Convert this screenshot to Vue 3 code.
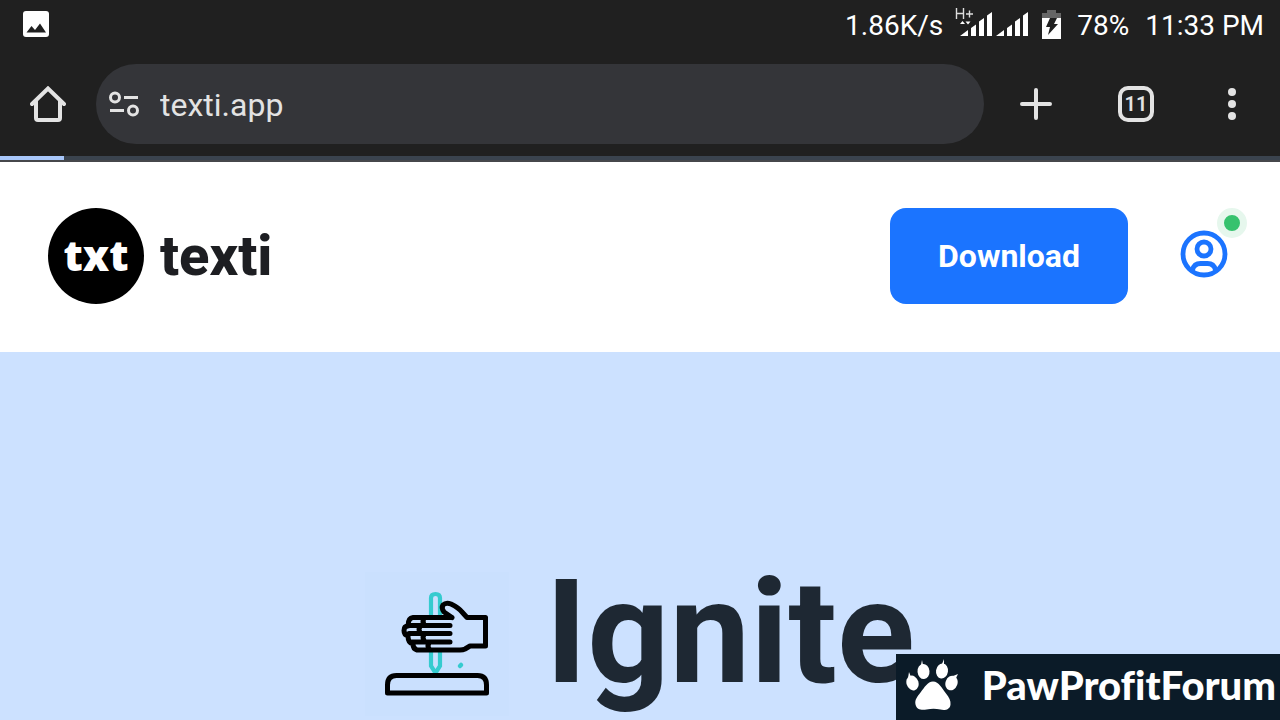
<script setup>
import { ref } from 'vue'

const address = ref('texti.app')
const tabs = 11
const loaded = 5
</script>

<template>
  <div class="screen">
    <header class="chrome">
      <div class="status">
        <svg class="photo" width="26" height="26" viewBox="0 0 26 26" aria-hidden="true">
          <rect width="26" height="26" rx="3" fill="#fff" />
          <path d="M3.5 21.5 8.5 15l3.5 4 5-6.500 6 9z" fill="#202020" />
        </svg>
        <span class="speed">1.86K/s</span>
        <svg class="signal" width="74" height="32" viewBox="0 0 74 32" aria-hidden="true">
          <path d="M1.500 0v11M8.500 0v11M1.500 5.500h7M11 6h7M14.500 2.500v7" stroke="#ddd" stroke-width="1.400" fill="none" />
          <path d="M5 16l2.500-3 2.500 3zM10.500 13.500h5L13 16.500z" fill="#fff" />
          <path d="M5 28l8-6v6zM16 20l5-3.500V28h-5zM24 13.500l5-3.500v18h-5zM32 7.500 37 4v24h-5zM41 28l8-6v6zM52 20l5-3.500V28h-5zM60 13.500l5-3.500v18h-5zM68 7.500 73 4v24h-5z" fill="#fff" />
        </svg>
        <svg class="battery" width="19" height="29" viewBox="0 0 19 29" aria-hidden="true">
          <path d="M5 0h9v3h5v5H0V3h5z" fill="#666" />
          <path d="M0 8h19v21H0z" fill="#fff" />
          <path d="M8 8h7l-3 6h4L6 25l2-8H4z" fill="#202020" />
        </svg>
        <span>78%</span>
        <time class="clock">11:33 PM</time>
      </div>

      <div class="toolbar">
        <button class="tool home" aria-label="Home">
          <svg width="36" height="36" viewBox="0 0 36 36" fill="none" stroke="#e3e3e3" stroke-width="4">
            <path d="M2 18 18 2.500 34 18" stroke-linecap="round" />
            <path d="M6 15v17q0 2 2 2h20q2 0 2-2V15" />
          </svg>
        </button>
        <div class="omnibox">
          <button class="tool site" aria-label="Site information">
            <svg width="32" height="26" viewBox="0 0 32 26" fill="none" stroke="#e3e3e3" stroke-width="3">
              <circle cx="7" cy="6.500" r="4.500" />
              <path d="M16 6.500H30M2 19.500h14" />
              <circle cx="25" cy="19.500" r="4.500" />
            </svg>
          </button>
          <input v-model="address" class="address" type="text" aria-label="Address" />
        </div>
        <button class="tool plus" aria-label="New tab">
          <svg width="32" height="32" viewBox="0 0 32 32" stroke="#e3e3e3" stroke-width="4" stroke-linecap="round">
            <path d="M16 2v28M2 16h28" />
          </svg>
        </button>
        <button class="tool tabs" aria-label="Open tabs">{{ tabs }}</button>
        <button class="tool more" aria-label="More options">
          <svg width="8" height="32" viewBox="0 0 8 32" fill="#e3e3e3">
            <circle cx="4" cy="4" r="4" /><circle cx="4" cy="16" r="4" /><circle cx="4" cy="28" r="4" />
          </svg>
        </button>
      </div>
      <div class="loading"><div class="loaded" :style="{ width: loaded + '%' }"></div></div>
    </header>

    <nav class="site-bar">
      <a class="brand" href="#">
        <span class="badge">txt</span>
        <span class="name">texti</span>
      </a>
      <button class="download">Download</button>
      <button class="account" aria-label="Account">
        <svg width="48" height="48" viewBox="0 0 48 48" fill="none" stroke="#1b74ff" stroke-width="4.800">
          <circle cx="24" cy="24" r="21" />
          <circle cx="24" cy="19" r="7" />
          <path d="M12.500 41v-1q1.500-6.500 8-6.500h7q6.500 0 8 6.500v1" />
        </svg>
        <span class="online"></span>
      </button>
    </nav>

    <main class="hero">
      <svg class="art" width="144" height="144" viewBox="1 0 144 144" fill="none" aria-hidden="true">
        <rect x="1" width="144" height="144" fill="#cae0fe" />
        <g stroke="#35cbcf" stroke-width="4.200">
          <path d="M67 43V26q0-4 4.500-4t4.500 4v17M67 80v14l4.500 7 4.500-7V80" />
          <path d="m96 94 1-1" stroke-linecap="round" stroke-width="4.500" />
        </g>
        <g stroke="#000" stroke-width="5" stroke-linejoin="round" stroke-linecap="round">
          <path d="M88 45.500 80 40q-3-4-1-7 3-3 8-1 8 4 11 8l5 5.500h18.500v28.500H106l-5 3q-2 1-5 1H53q-4-1-4-6-5-1-5-8-4-1-4-5.500t4-4.500q0-8 5-8.500h39" />
          <path d="M44 53.500h42M45 61.500h41M48 70h38M60 46q-2 4 0 7M56 54.500q-2 3 0 6M60 62.500q-2 3 0 6M65 71q-2 3 0 6" />
          <path d="M23.500 121v-8q0-9.500 9-9.500h81q9 0 9 9.500v8z" />
        </g>
      </svg>
      <h1>Ignite</h1>
    </main>

    <aside class="watermark">
      <svg width="52" height="52" viewBox="0 0 52 52" fill="#fff" aria-hidden="true">
        <ellipse cx="6.500" cy="24" rx="6" ry="7.500" transform="rotate(-18 6.500 24)" />
        <ellipse cx="17.500" cy="12.500" rx="6" ry="7.500" transform="rotate(-5 17.500 12.500)" />
        <ellipse cx="36" cy="12" rx="6" ry="7.500" transform="rotate(8 36 12)" />
        <ellipse cx="45.500" cy="24" rx="6" ry="7.500" transform="rotate(20 45.500 24)" />
        <path d="M2 19 3 13l2 5zM15 6l1-5 1 5zM36 5l2-5v6zM47 17l5-2-2 4z" />
        <path d="M27 22.500c6 0 9 7 13 12 3 4 5 7 4.500 11-.500 6-7 6-10 5-5-1-9-1-14 0-5 1-10 0-11-5-1-5 2-8 5-12 4-5 7-11 12.500-11z" />
      </svg>
      <span>PawProfitForum</span>
    </aside>
  </div>
</template>

<style>
body {
  margin: 0;
}
</style>

<style scoped>
.screen {
  display: flex;
  flex-direction: column;
  height: 100vh;
  overflow: hidden;
  font-family: Roboto, sans-serif;
  background: #fff;
}
button {
  padding: 0;
  border: 0;
  background: none;
  font-family: inherit;
}
svg {
  display: block;
  flex: none;
}
.chrome {
  flex: none;
  background: #202020;
  color: #fff;
}
.status {
  display: flex;
  align-items: center;
  height: 48px;
  padding: 0 16px 0 23px;
  font-size: 28px;
  line-height: 48px;
}
.status span,
.clock {
  padding-top: 3px;
}
.speed {
  margin-left: auto;
}
.signal {
  margin-left: 12px;
}
.battery {
  margin: 0 16px 0 13px;
}
.clock {
  margin-left: 16px;
}
.toolbar {
  display: flex;
  align-items: center;
  height: 80px;
  padding: 16px 0 12px;
}
.tool {
  display: flex;
  align-items: center;
  justify-content: center;
  flex: none;
}
.home {
  width: 96px;
  height: 80px;
}
.omnibox {
  display: flex;
  align-items: center;
  flex: 1;
  min-width: 0;
  height: 80px;
  border-radius: 40px;
  background: #343539;
}
.site {
  width: 32px;
  margin: 0 20px 0 12px;
}
.address {
  flex: 1;
  min-width: 0;
  height: 64px;
  padding: 1px 0 0;
  border: 0;
  outline: 0;
  background: none;
  color: #e3e3e3;
  font: 32px Roboto, sans-serif;
}
.plus {
  margin-left: 36px;
}
.tabs {
  box-sizing: border-box;
  width: 36px;
  height: 36px;
  margin-left: 66px;
  border: 4px solid #e3e3e3;
  border-radius: 10px;
  color: #e3e3e3;
  font-size: 20px;
  font-weight: 600;
}
.more {
  margin: 0 44px 0 74px;
}
.loading {
  height: 4px;
  border-bottom: 2px solid #46474b;
  background: #3a434e;
}
.loaded {
  height: 4px;
  background: #a8c7fa;
}
.site-bar {
  display: flex;
  align-items: center;
  flex: none;
  height: 96px;
  padding: 46px 52px 48px 48px;
}
.brand {
  display: flex;
  align-items: center;
  gap: 16px;
  margin-right: auto;
  color: #1d1e22;
  text-decoration: none;
}
.badge {
  box-sizing: border-box;
  width: 96px;
  height: 96px;
  border-radius: 50%;
  background: #000;
  color: #fff;
  font: 900 42px/94px "Noto Sans", sans-serif;
  text-align: center;
}
.name {
  font-size: 56px;
  font-weight: 800;
  line-height: 96px;
}
.download {
  height: 96px;
  padding: 0 48px;
  border-radius: 16px;
  background: #1b74ff;
  color: #fff;
  font-size: 32px;
  font-weight: 700;
}
.account {
  position: relative;
  margin: 0 0 4px 52px;
}
.online {
  position: absolute;
  top: -22px;
  right: -19px;
  width: 16px;
  height: 16px;
  border: 7px solid #e6f7ed;
  border-radius: 50%;
  background: #36c26e;
}
.hero {
  display: flex;
  align-items: flex-end;
  justify-content: center;
  gap: 36px;
  flex: 1 0 auto;
  padding: 196px 48px 4px;
  background: #cce1ff;
}
h1 {
  margin: 0;
  color: #1e2833;
  font-size: 144px;
  font-weight: 700;
  line-height: 166px;
}
.watermark {
  position: fixed;
  right: 0;
  bottom: 0;
  display: flex;
  align-items: center;
  gap: 24px;
  box-sizing: border-box;
  height: 66px;
  padding: 0 4px 4px 10px;
  background: #0b1b28;
  color: #fff;
  font: 900 40px/62px Lato, sans-serif;
  font-variant-ligatures: none;
}
</style>
